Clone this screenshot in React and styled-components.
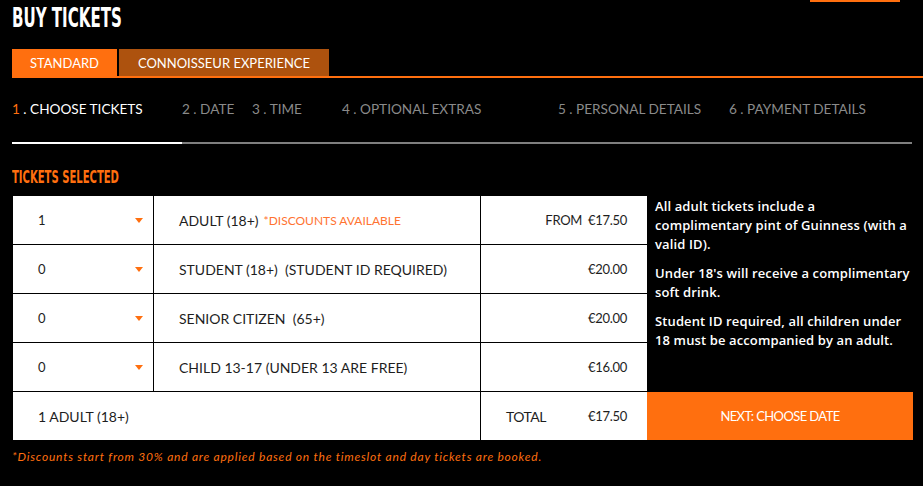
import React from "react";
import styled, { createGlobalStyle } from "styled-components";

const ORANGE = "#ff6f0f";

const Global = createGlobalStyle`
  html, body { margin: 0; padding: 0; background: #000; }
  body { font-family: Lato, "Open Sans", sans-serif; color: #fff; }
  * { box-sizing: border-box; }
`;

const Page = styled.div`
  width: 923px;
  height: 486px;
  padding: 0 11px 0 12px;
  overflow: hidden;
`;

const Header = styled.header`
  display: flex;
  justify-content: space-between;
  align-items: flex-start;
  height: 49px;
`;

const Condensed = styled.span`
  display: inline-block;
  font-family: "DejaVu Sans Condensed", "DejaVu Sans", sans-serif;
  font-weight: 700;
  text-transform: uppercase;
  transform: scaleX(0.62);
  transform-origin: left center;
  white-space: nowrap;
`;

const Title = styled(Condensed)`
  font-size: 27px;
  line-height: 1;
  margin-top: 4px;
  color: #fff;
`;

const TopBar = styled.div`
  width: 90px;
  height: 2px;
  margin-right: 12px;
  background: ${ORANGE};
`;

const Tabs = styled.nav`
  display: flex;
  gap: 2px;
  margin-right: -11px;
  border-bottom: 2px solid ${ORANGE};
`;

const Tab = styled.div`
  height: 27px;
  width: ${(p) => p.$w}px;
  display: flex;
  align-items: center;
  justify-content: center;
  background: ${(p) => (p.$active ? ORANGE : "#ad520e")};
  font-size: 13px;
  text-transform: uppercase;
  color: #fff;
`;

const Steps = styled.ol`
  display: flex;
  list-style: none;
  margin: 0;
  padding: 23px 0 24px;
`;

const Step = styled.li`
  width: ${(p) => p.$w}px;
  font-size: 13.6px;
  color: ${(p) => (p.$active ? "#fff" : "#8a8a8a")};
  white-space: nowrap;
  line-height: 17px;
`;

const StepNum = styled.span`
  color: ${(p) => (p.$active ? ORANGE : "inherit")};
`;

const Progress = styled.div`
  display: flex;
  height: 2px;
  background: #7f7f7f;
`;

const ProgressFill = styled.div`
  width: ${(p) => p.$w}px;
  background: #fff;
`;

const SectionTitle = styled(Condensed)`
  font-size: 18px;
  line-height: 1;
  color: ${ORANGE};
  margin: 24px 0 0;
`;

const Grid = styled.div`
  display: grid;
  grid-template-columns: 140px 326px 166px 265px;
  grid-template-rows: repeat(5, 48px);
  gap: 1px;
  margin: 10px 0 0 1px;
  color: #1e1e1e;
  font-size: 14px;
`;

const Cell = styled.div`
  background: #fff;
  display: flex;
  align-items: center;
  padding: 0 20px 0 25px;
`;

const QtyCell = styled(Cell)`
  justify-content: space-between;
  padding: 0 10px 0 25px;
  font-size: 13px;
`;

const Caret = styled.span`
  width: 0;
  height: 0;
  border-left: 4px solid transparent;
  border-right: 4px solid transparent;
  border-top: 5px solid ${ORANGE};
`;

const Discount = styled.span`
  color: #ff7331;
  font-size: 12px;
  margin-left: 5px;
`;

const PriceCell = styled(Cell)`
  justify-content: flex-end;
  gap: 6px;
  font-size: 13px;
  letter-spacing: -0.3px;
`;

const Info = styled.aside`
  grid-column: 4;
  grid-row: 1 / span 4;
  background: #000;
  color: #fff;
  padding: 1px 0 0 7px;
  font-family: "Open Sans", sans-serif;
  font-weight: 600;
  font-size: 13px;
  letter-spacing: 0.12px;
  line-height: 19px;
  & p { margin: 0 0 10px; }
`;

const Summary = styled(Cell)`
  grid-column: 1 / span 2;
`;

const TotalCell = styled(Cell)`
  justify-content: space-between;
`;

const TotalLabel = styled.span`
  font-size: 14px;
  letter-spacing: -0.5px;
`;

const NextButton = styled.button`
  margin-left: -1px;
  border: 0;
  background: ${ORANGE};
  color: #fff;
  font-family: Lato, sans-serif;
  font-size: 13px;
  letter-spacing: -0.6px;
  text-transform: uppercase;
  cursor: pointer;
`;

const Footnote = styled.p`
  margin: 9px 0 0;
  color: ${ORANGE};
  font-style: italic;
  font-size: 12px;
  letter-spacing: 0.78px;
`;

const steps = [
  { n: 1, label: "CHOOSE TICKETS", w: 170, active: true },
  { n: 2, label: "DATE", w: 70 },
  { n: 3, label: "TIME", w: 90 },
  { n: 4, label: "OPTIONAL EXTRAS", w: 216 },
  { n: 5, label: "PERSONAL DETAILS", w: 171 },
  { n: 6, label: "PAYMENT DETAILS", w: 180 },
];

const tickets = [
  { qty: 1, name: "ADULT (18+)", discount: true, from: true, price: "€17.50" },
  { qty: 0, name: "STUDENT (18+)\u00a0 (STUDENT ID REQUIRED)", price: "€20.00" },
  { qty: 0, name: "SENIOR CITIZEN\u00a0 (65+)", price: "€20.00" },
  { qty: 0, name: "CHILD 13-17 (UNDER 13 ARE FREE)", price: "€16.00" },
];

export default function App() {
  return (
    <Page>
      <Global />
      <Header>
        <Title>Buy Tickets</Title>
        <TopBar />
      </Header>
      <Tabs>
        <Tab $active $w={105}>Standard</Tab>
        <Tab $w={210}>Connoisseur Experience</Tab>
      </Tabs>
      <Steps>
        {steps.map((s) => (
          <Step key={s.n} $w={s.w} $active={s.active}>
            <StepNum $active={s.active}>{s.n}</StepNum> . {s.label}
          </Step>
        ))}
      </Steps>
      <Progress>
        <ProgressFill $w={170} />
      </Progress>
      <SectionTitle>Tickets Selected</SectionTitle>
      <Grid>
        {tickets.map((t, i) => (
          <React.Fragment key={i}>
            <QtyCell>
              {t.qty}
              <Caret />
            </QtyCell>
            <Cell>
              {t.name}
              {t.discount && <Discount>*DISCOUNTS AVAILABLE</Discount>}
            </Cell>
            <PriceCell>
              {t.from && <span>FROM</span>}
              <span>{t.price}</span>
            </PriceCell>
          </React.Fragment>
        ))}
        <Info>
          <p>All adult tickets include a complimentary pint of Guinness (with a valid ID).</p>
          <p>Under 18's will receive a complimentary soft drink.</p>
          <p>Student ID required, all children under 18 must be accompanied by an adult.</p>
        </Info>
        <Summary>1 ADULT (18+)</Summary>
        <TotalCell>
          <TotalLabel>TOTAL</TotalLabel>
          <PriceCell as="span" style={{ padding: 0 }}>€17.50</PriceCell>
        </TotalCell>
        <NextButton>Next: Choose Date</NextButton>
      </Grid>
      <Footnote>
        *Discounts start from 30% and are applied based on the timeslot and day tickets are booked.
      </Footnote>
    </Page>
  );
}
